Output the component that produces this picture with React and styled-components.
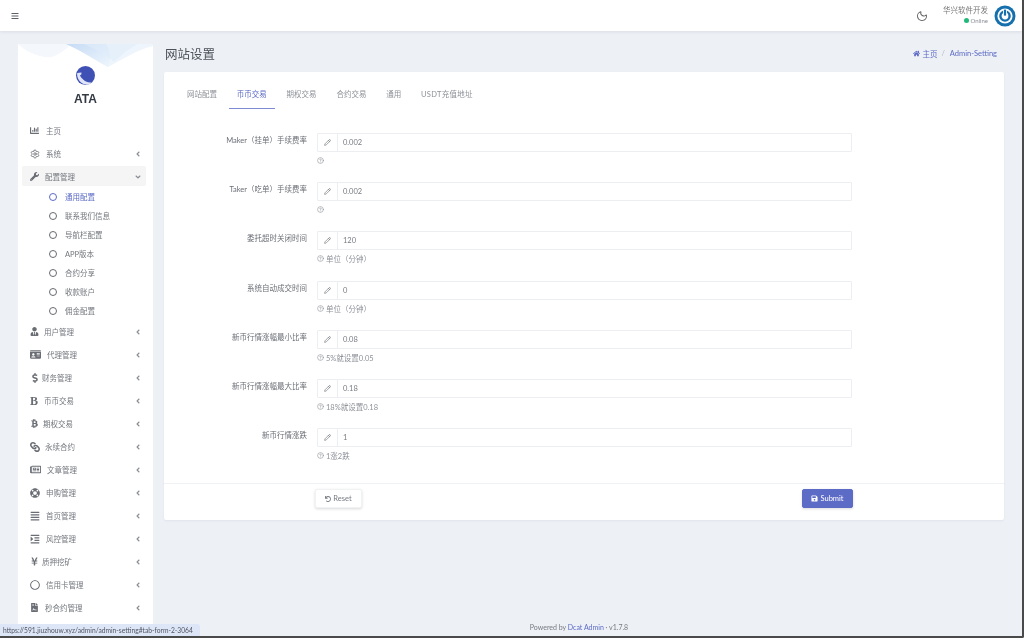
import React from 'react';
import styled, { createGlobalStyle } from 'styled-components';
import { FaBtc, FaChartBar, FaDollarSign, FaHome, FaIdCard, FaIndent, FaLifeRing, FaLink, FaRegCircle, FaRegNewspaper, FaAlignJustify, FaBars, FaSave, FaFileContract, FaUndo, FaUserTie, FaWrench, FaYenSign, FaAngleLeft, FaAngleDown } from 'react-icons/fa';
import { CircleHelp, Moon, Pencil, Settings } from 'lucide-react';

const FONT = `Lato, "Noto Sans CJK SC", sans-serif`;

const GlobalStyle = createGlobalStyle`
  html, body { margin: 0; padding: 0; background: #edf0f5; }
  * { box-sizing: border-box; }
`;

const Page = styled.div`
  position: relative;
  width: 1024px;
  height: 638px;
  overflow: hidden;
  display: flex;
  flex-direction: column;
  background: #edf0f5;
  border-right: 2px solid #4a4a4a;
  border-bottom: 2px solid #4a4a4a;
  border-bottom-right-radius: 2px;
  font-family: ${FONT};
  color: #6b6f76;
  filter: blur(0.5px);
`;

const Topbar = styled.header`
  flex: 0 0 31px;
  display: flex;
  align-items: center;
  background: #fff;
  padding: 0 6px 0 11px;
  box-shadow: 0 1px 3px rgba(80, 90, 110, 0.12);
  z-index: 2;
`;

const MenuToggle = styled.span`
  display: flex;
  color: #5c6066;
  font-size: 8px;
`;

const TopRight = styled.div`
  margin-left: auto;
  display: flex;
  align-items: center;
`;

const MoonIcon = styled(Moon)`
  width: 12px;
  height: 12px;
  color: #666;
  margin-right: 15px;
  transform: rotate(-15deg);
`;

const UserInfo = styled.div`
  display: flex;
  flex-direction: column;
  align-items: flex-end;
  margin-right: 6px;
  font-size: 7.5px;
  line-height: 10px;
  color: #777;
`;

const OnlineRow = styled.span`
  display: flex;
  align-items: center;
  gap: 2px;
  font-size: 6px;
  color: #8a8f96;
`;

const OnlineDot = styled.i`
  width: 5px;
  height: 5px;
  border-radius: 50%;
  background: #21b978;
`;

const Body = styled.div`
  flex: 1;
  min-height: 0;
  display: flex;
  padding-left: 18px;
`;

const Sidebar = styled.aside`
  flex: 0 0 135px;
  margin-top: 13px;
  background: #fff;
  position: relative;
  overflow: hidden;
`;

const Wave = styled.svg`
  position: absolute;
  top: 0;
  left: 0;
`;

const Brand = styled.div`
  height: 72px;
  padding-top: 22px;
  display: flex;
  flex-direction: column;
  align-items: center;
`;

const BrandName = styled.div`
  margin-top: 7px;
  font-size: 12px;
  line-height: 14px;
  font-weight: 700;
  color: #333a44;
  font-family: "Liberation Sans", sans-serif;
`;

const Menu = styled.nav`
  display: flex;
  flex-direction: column;
  padding: 3px 7px 0 4px;
`;

const MenuRow = styled.div`
  flex: 0 0 auto;
  display: flex;
  align-items: center;
  padding: 0 4px 0 8px;
  font-size: 7.5px;
  color: #73777d;
  border-radius: 2px;
  background: ${p => (p.$open ? '#f5f5f6' : 'transparent')};
  height: ${p => (p.$open ? '20px' : '23px')};
  margin: ${p => (p.$open ? '1px 0 1px' : '0')};
`;

const MenuIcon = styled.span`
  flex: 0 0 ${p => p.$slot}px;
  display: flex;
  align-items: center;
  color: #6a6e74;
  font-size: 9px;
`;

const LetterIcon = styled.span`
  font: 700 12px "Liberation Serif", serif;
  line-height: 12px;
`;

const ChainIcon = styled(FaLink)`
  transform: rotate(90deg);
`;

const Caret = styled.span`
  margin-left: auto;
  padding-top: 1px;
  display: flex;
  color: #8b8f95;
  font-size: 8px;
`;

const SubRow = styled.div`
  height: 19px;
  flex: 0 0 auto;
  display: flex;
  align-items: center;
  padding-left: 27px;
  gap: 8px;
  font-size: 7.5px;
  color: ${p => (p.$active ? '#5c6bc6' : '#73777d')};
`;

const SubDot = styled.i`
  width: 8px;
  height: 8px;
  border-radius: 50%;
  border: 1px solid ${p => (p.$active ? '#5c6bc6' : '#666a70')};
`;

const Main = styled.main`
  flex: 1;
  min-width: 0;
  display: flex;
  flex-direction: column;
  padding: 0 18px 0 11px;
`;

const TitleRow = styled.div`
  flex: 0 0 41px;
  display: flex;
  align-items: center;
  padding: 3px 7px 0 1px;
`;

const Title = styled.h1`
  margin: 0;
  font-size: 12.5px;
  font-weight: 400;
  color: #4c5058;
`;

const Crumbs = styled.div`
  margin-left: auto;
  display: flex;
  align-items: center;
  gap: 2px;
  font-size: 7.5px;
  color: #5c6bc6;
`;

const CrumbSep = styled.span`
  color: #b5b9c0;
  margin: 0 3px 0 2px;
`;

const Card = styled.section`
  flex: 0 0 448px;
  background: #fff;
  border-radius: 2px;
  box-shadow: 0 1px 2px rgba(80, 90, 110, 0.08);
  display: flex;
  flex-direction: column;
`;

const Tabs = styled.div`
  display: flex;
  gap: 3.8px;
  margin-top: 12px;
  padding-left: 15px;
`;

const Tab = styled.div`
  height: 25px;
  padding: 0 8px 6px;
  display: flex;
  align-items: center;
  font-size: 7.5px;
  letter-spacing: ${p => (p.$wide ? '0.3px' : '0')};
  color: ${p => (p.$active ? '#5c6bc6' : '#8d9198')};
  border-bottom: 1.5px solid ${p => (p.$active ? '#7f8bd0' : 'transparent')};
`;

const Form = styled.div`
  padding: 24px 0 6px;
  display: flex;
  flex-direction: column;
`;

const Field = styled.div`
  height: 49.2px;
  display: grid;
  grid-template-columns: 143px 535px;
  column-gap: 10px;
  align-content: start;
`;

const Label = styled.label`
  text-align: right;
  font-size: 7.5px;
  line-height: 10px;
  padding-top: 3px;
  color: #6b6f76;
`;

const InputGroup = styled.div`
  height: 19px;
  display: flex;
  border: 1px solid #eceef1;
  border-radius: 1px;
`;

const Addon = styled.span`
  flex: 0 0 20px;
  display: flex;
  align-items: center;
  justify-content: center;
  border-right: 1px solid #eceef1;
  color: #63676d;
`;

const Value = styled.span`
  padding-left: 5px;
  display: flex;
  align-items: center;
  font-size: 7.5px;
  color: #777b82;
`;

const Help = styled.div`
  margin-top: 4px;
  display: flex;
  align-items: center;
  gap: 2px;
  height: 9px;
  font-size: 7.5px;
  color: #8d9198;
`;

const CardFooter = styled.div`
  flex: 1;
  border-top: 1px solid #f0f1f4;
  padding: 5px 0 0 151px;
`;

const FooterInner = styled.div`
  width: 538px;
  display: flex;
  justify-content: space-between;
  align-items: flex-start;
`;

const ResetButton = styled.button`
  width: 47px;
  height: 19px;
  display: flex;
  align-items: center;
  justify-content: center;
  gap: 2px;
  background: #fff;
  border: 1px solid #f1f2f4;
  border-radius: 2px;
  box-shadow: 0 1px 3px rgba(0, 0, 0, 0.15);
  font: 7.5px ${FONT};
  color: #777b82;
  padding: 0;
`;

const SubmitButton = styled(ResetButton)`
  width: 51px;
  background: #5c6bc6;
  border-color: #5c6bc6;
  color: #fff;
`;

const PageFooter = styled.footer`
  margin-top: auto;
  height: 17px;
  padding-right: 10px;
  text-align: center;
  font-size: 7px;
  line-height: 16px;
  color: #777b82;
`;

const FooterLink = styled.span`
  color: #5c6bc6;
`;

const StatusBubble = styled.div`
  position: absolute;
  left: 0;
  bottom: 0;
  width: 200px;
  height: 12px;
  padding-left: 3px;
  background: #dde6f7;
  border-top-right-radius: 3px;
  font-size: 6.7px;
  line-height: 12px;
  color: #4f5560;
  white-space: nowrap;
  z-index: 3;
`;

const PowerAvatar = () => (
  <svg width="22" height="22" viewBox="0 0 22 22">
    <circle cx="11" cy="11" r="10.5" fill="#1670ad" />
    <circle cx="11" cy="11" r="7.6" fill="#fff" />
    <circle cx="11" cy="11" r="4.6" fill="none" stroke="#1670ad" strokeWidth="2.4" />
    <rect x="9" y="4" width="4" height="6.5" fill="#fff" />
    <rect x="9.9" y="4.6" width="2.2" height="6" fill="#1670ad" />
  </svg>
);

const LogoMark = () => (
  <svg width="19" height="19" viewBox="0 0 19 19">
    <circle cx="9.5" cy="9.5" r="9.5" fill="#3f51b5" />
    <path d="M1.2 7 C0.5 12 4 17.5 9.5 18.5 C12 19 14.5 18 16 16.5 C12 17 8.5 15.5 7 13 C5.5 11 5 9 5.5 6.5 Z" fill="#dfe5f7" />
    <path d="M4 9 C5 13 9 15 13 14 C10 13 7.5 11.5 6.5 8.5 Z" fill="#3f51b5" />
  </svg>
);

const SideWave = () => (
  <Wave width="135" height="26" viewBox="0 0 135 26">
    <defs>
      <linearGradient id="w1" x1="0" y1="0" x2="1" y2="1">
        <stop offset="0" stopColor="#c6dbf5" />
        <stop offset="1" stopColor="#eef6fd" />
      </linearGradient>
    </defs>
    <path d="M0 0 L6 5 C14 10 24 14 34 13 C44 9 50 4 52 0 Z" fill="#f4f7fb" />
    <path d="M48 0 C62 6 76 16 90 23 C100 18 118 6 135 2 L135 0 Z" fill="#eff5fc" />
    <path d="M48 0 C62 6 76 15 90 23 C94 16 92 6 88 0 Z" fill="url(#w1)" />
    <path d="M66 0 C78 6 88 10 96 18 C102 12 112 4 120 0 Z" fill="#dfecfa" opacity="0.6" />
  </Wave>
);

const MENU_TOP = [
  { text: '主页', slot: 16, icon: <FaChartBar />, noCaret: true },
  { text: '系统', slot: 16, icon: <Settings size={10} /> },
];

const SUB_ITEMS = ['通用配置', '联系我们信息', '导航栏配置', 'APP版本', '合约分享', '收款账户', '佣金配置'];

const MENU_BOTTOM = [
  { text: '用户管理', slot: 14, icon: <FaUserTie /> },
  { text: '代理管理', slot: 17, icon: <FaIdCard size={11} /> },
  { text: '财务管理', slot: 12, icon: <FaDollarSign size={10} /> },
  { text: '币币交易', slot: 14, icon: <LetterIcon>B</LetterIcon> },
  { text: '期权交易', slot: 13, icon: <FaBtc /> },
  { text: '永续合约', slot: 15, icon: <ChainIcon size={10} /> },
  { text: '文章管理', slot: 17, icon: <FaRegNewspaper size={11} /> },
  { text: '申购管理', slot: 16, icon: <FaLifeRing size={10} /> },
  { text: '首页管理', slot: 16, icon: <FaAlignJustify size={10} /> },
  { text: '风控管理', slot: 16, icon: <FaIndent size={10} /> },
  { text: '质押挖矿', slot: 12, icon: <FaYenSign /> },
  { text: '信用卡管理', slot: 16, icon: <FaRegCircle size={10} /> },
  { text: '秒合约管理', slot: 15, icon: <FaFileContract /> },
];

const TABS = ['网站配置', '币币交易', '期权交易', '合约交易', '通用', 'USDT充值地址'];

const FIELDS = [
  { label: 'Maker（挂单）手续费率', value: '0.002', help: '' },
  { label: 'Taker（吃单）手续费率', value: '0.002', help: '' },
  { label: '委托超时关闭时间', value: '120', help: '单位（分钟）' },
  { label: '系统自动成交时间', value: '0', help: '单位（分钟）' },
  { label: '新币行情涨幅最小比率', value: '0.08', help: '5%就设置0.05' },
  { label: '新币行情涨幅最大比率', value: '0.18', help: '18%就设置0.18' },
  { label: '新币行情涨跌', value: '1', help: '1涨2跌' },
];

const SideItem = ({ item }) => (
  <MenuRow>
    <MenuIcon $slot={item.slot}>{item.icon}</MenuIcon>
    {item.text}
    {!item.noCaret && <Caret><FaAngleLeft /></Caret>}
  </MenuRow>
);

export default function App() {
  return (
    <Page>
      <GlobalStyle />
      <Topbar>
        <MenuToggle><FaBars /></MenuToggle>
        <TopRight>
          <MoonIcon />
          <UserInfo>
            华兴软件开发
            <OnlineRow><OnlineDot />Online</OnlineRow>
          </UserInfo>
          <PowerAvatar />
        </TopRight>
      </Topbar>
      <Body>
        <Sidebar>
          <SideWave />
          <Brand>
            <LogoMark />
            <BrandName>ATA</BrandName>
          </Brand>
          <Menu>
            {MENU_TOP.map(item => <SideItem key={item.text} item={item} />)}
            <MenuRow $open>
              <MenuIcon $slot={15}><FaWrench /></MenuIcon>
              配置管理
              <Caret><FaAngleDown /></Caret>
            </MenuRow>
            {SUB_ITEMS.map((text, i) => (
              <SubRow key={text} $active={i === 0}>
                <SubDot $active={i === 0} />
                {text}
              </SubRow>
            ))}
            {MENU_BOTTOM.map(item => <SideItem key={item.text} item={item} />)}
          </Menu>
        </Sidebar>
        <Main>
          <TitleRow>
            <Title>网站设置</Title>
            <Crumbs>
              <FaHome size={7} /> 主页 <CrumbSep>/</CrumbSep> Admin-Setting
            </Crumbs>
          </TitleRow>
          <Card>
            <Tabs>
              {TABS.map((t, i) => (
                <Tab key={t} $active={i === 1} $wide={i === 5}>{t}</Tab>
              ))}
            </Tabs>
            <Form>
              {FIELDS.map(f => (
                <Field key={f.label}>
                  <Label>{f.label}</Label>
                  <div>
                    <InputGroup>
                      <Addon><Pencil size={7} /></Addon>
                      <Value>{f.value}</Value>
                    </InputGroup>
                    <Help><CircleHelp size={7} />{f.help}</Help>
                  </div>
                </Field>
              ))}
            </Form>
            <CardFooter>
              <FooterInner>
                <ResetButton><FaUndo size={6} /> Reset</ResetButton>
                <SubmitButton><FaSave size={7} /> Submit</SubmitButton>
              </FooterInner>
            </CardFooter>
          </Card>
          <PageFooter>
            Powered by <FooterLink>Dcat Admin</FooterLink> · v1.7.8
          </PageFooter>
        </Main>
      </Body>
      <StatusBubble>https://591.jiuzhouw.xyz/admin/admin-setting#tab-form-2-3064</StatusBubble>
    </Page>
  );
}
